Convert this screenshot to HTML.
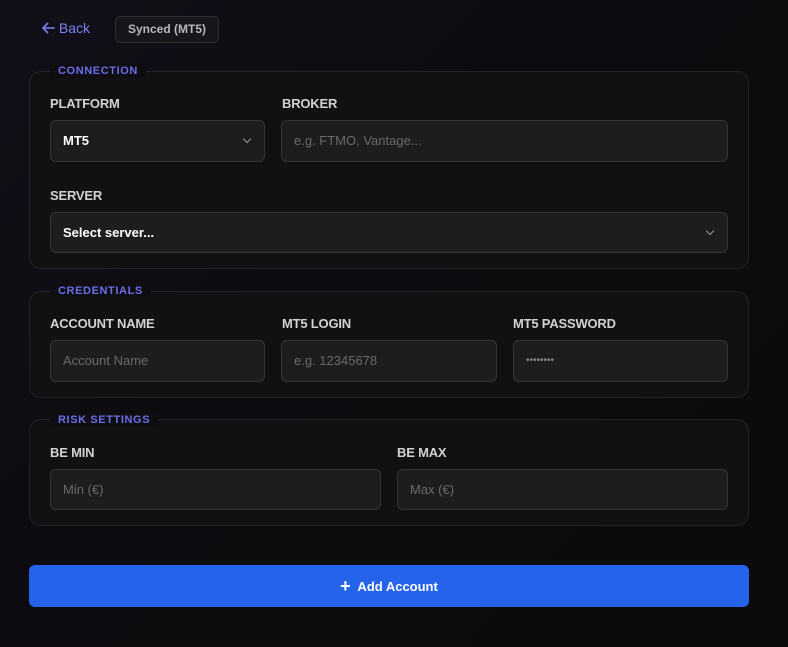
<!DOCTYPE html><html><head><style>
body{margin:0;width:788px;height:647px;overflow:hidden;background:linear-gradient(135deg,#111019 0%,#0c0c10 40%,#0b0b0d 100%);font-family:"Liberation Sans",sans-serif;position:relative}
.a{position:absolute}
.back{left:41px;top:20px;color:#7b83f0;font-size:14px}
.tag{left:115px;top:16px;width:102px;height:25px;border:1px solid #2d2d33;border-radius:5px;background:#17171b;color:#b8b8bc;font-size:12px;font-weight:bold;text-align:center;line-height:25px}
.box{left:29px;width:718px;border:1px solid #232328;border-radius:12px;background:#111114}
.lg{left:50px;padding:0 8px;background:#0e0e12;color:#6c6ee8;font-size:11px;font-weight:bold;letter-spacing:.6px;line-height:14px}
.lb{color:#d2d2d4;font-size:13px;font-weight:bold;letter-spacing:-.2px}
.in{height:40px;border:1px solid #34343a;border-radius:6px;background:#1d1d1f;color:#6a6a6e;font-size:13px;line-height:40px;padding-left:12px;box-sizing:border-box}
.w{color:#fff;font-weight:bold}
.chev{position:absolute;right:14px;top:15px;width:5px;height:5px;border-right:1.3px solid #999;border-bottom:1.3px solid #999;transform:rotate(45deg)}
.btn{left:29px;top:565px;width:720px;height:42px;background:#2563eb;border-radius:6px;color:#fff;font-size:13px;font-weight:bold;text-align:center;line-height:42px}
</style></head><body>
<div class="a back"><svg width="14" height="12" viewBox="0 0 14 12" style="vertical-align:-1px"><path d="M13 6H2M6.5 1.5L2 6l4.5 4.5" fill="none" stroke="#7b83f0" stroke-width="1.6" stroke-linecap="round" stroke-linejoin="round"/></svg> Back</div>
<div class="a tag">Synced (MT5)</div>

<div class="a box" style="top:71px;height:196px"></div>
<div class="a lg" style="top:64px">CONNECTION</div>
<div class="a lb" style="left:50px;top:96px">PLATFORM</div>
<div class="a lb" style="left:282px;top:96px">BROKER</div>
<div class="a in w" style="left:50px;top:120px;width:215px;height:42px">MT5<span class="chev"></span></div>
<div class="a in" style="left:281px;top:120px;width:447px;height:42px">e.g. FTMO, Vantage...</div>
<div class="a lb" style="left:50px;top:188px">SERVER</div>
<div class="a in w" style="left:50px;top:212px;width:678px;height:41px">Select server...<span class="chev"></span></div>

<div class="a box" style="top:291px;height:105px"></div>
<div class="a lg" style="top:284px">CREDENTIALS</div>
<div class="a lb" style="left:50px;top:316px">ACCOUNT NAME</div>
<div class="a lb" style="left:282px;top:316px">MT5 LOGIN</div>
<div class="a lb" style="left:513px;top:316px">MT5 PASSWORD</div>
<div class="a in" style="left:50px;top:340px;width:215px;height:42px">Account Name</div>
<div class="a in" style="left:281px;top:340px;width:216px;height:42px">e.g. 12345678</div>
<div class="a in" style="left:513px;top:340px;width:215px;height:42px;color:#8a8a8e;font-size:10px">••••••••</div>

<div class="a box" style="top:419px;height:105px"></div>
<div class="a lg" style="top:413px">RISK SETTINGS</div>
<div class="a lb" style="left:50px;top:445px">BE MIN</div>
<div class="a lb" style="left:397px;top:445px">BE MAX</div>
<div class="a in" style="left:50px;top:469px;width:331px;height:41px">Min (€)</div>
<div class="a in" style="left:397px;top:469px;width:331px;height:41px">Max (€)</div>

<div class="a btn"><span style="font-size:18px;vertical-align:-1px">+</span>&nbsp; Add Account</div>
</body></html>
